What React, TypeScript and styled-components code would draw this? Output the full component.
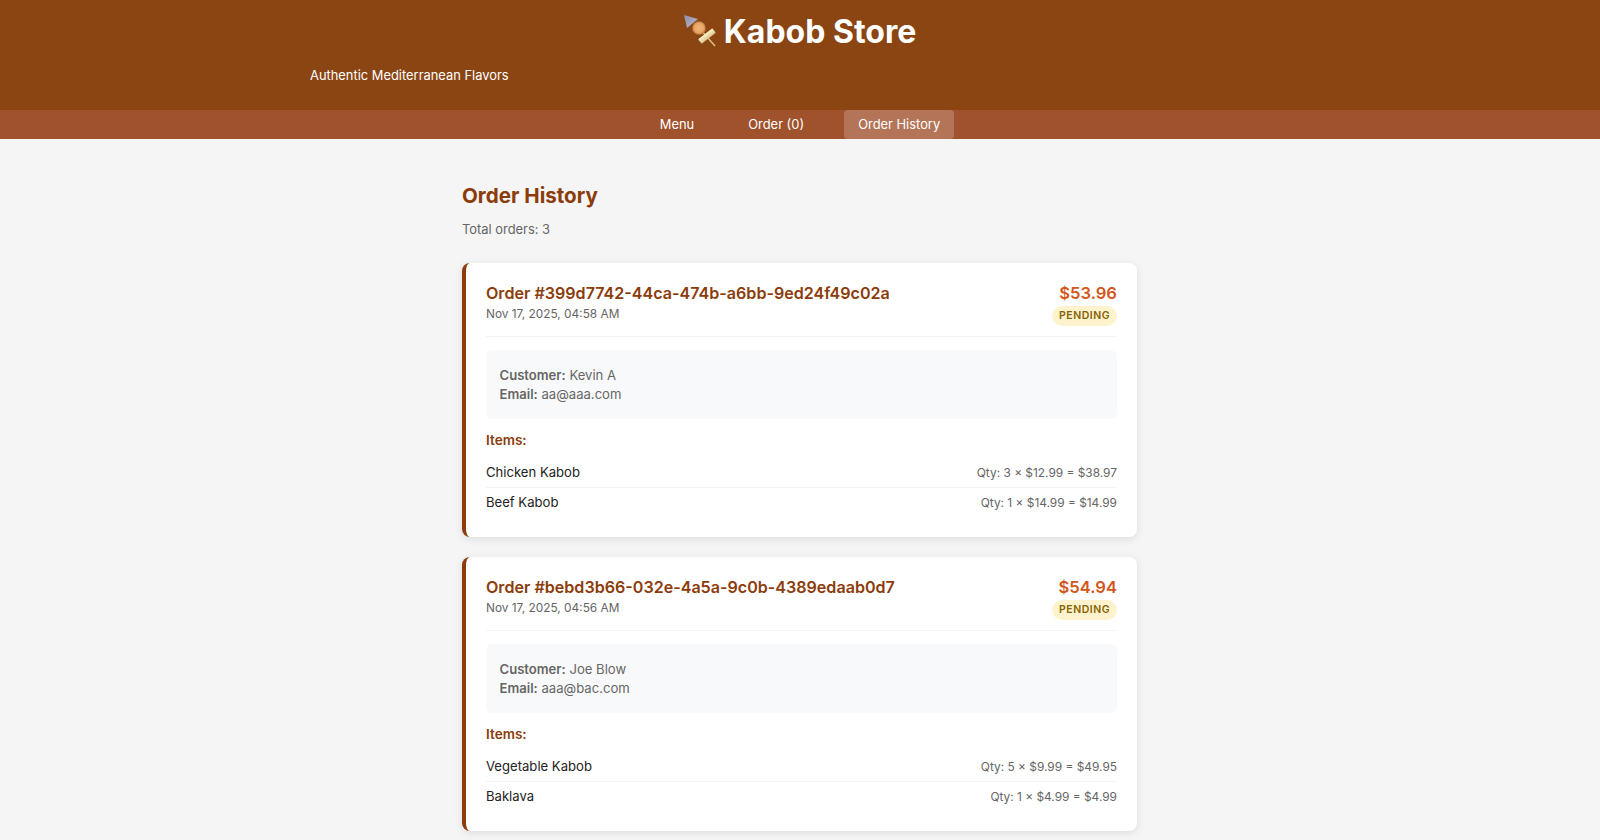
import React from 'react';
import styled, { createGlobalStyle } from 'styled-components';

const GlobalStyle = createGlobalStyle`
   html, body {
      margin: 0;
      padding: 0;
      height: 840px;
      overflow: hidden;
      background: #f5f5f5;
      font-family: Inter, "Liberation Sans", sans-serif;
   }
   * {
      box-sizing: border-box;
   }
`;

const Header = styled.header`
   background: #8b4513;
   color: #fff;
   height: 110px;
   padding-top: 11px;
`;

const HeaderInner = styled.div`
   width: 980px;
   margin: 0 auto;
`;

const Title = styled.h1`
   display: flex;
   justify-content: center;
   align-items: center;
   gap: 6px;
   margin: 0;
   font-size: 32px;
   line-height: 42px;
   font-weight: 700;
`;

const Tagline = styled.p`
   margin: 13px 0 0;
   font-size: 12.9px;
   line-height: 20px;
`;

const Nav = styled.nav`
   display: flex;
   justify-content: center;
   gap: 26px;
   height: 29px;
   background: #a0522d;
`;

const NavItem = styled.a<{ $active?: boolean }>`
   display: flex;
   align-items: center;
   padding: 0 14px;
   color: #fff;
   font-size: 12.9px;
   border-radius: 4px;
   background: ${props => (props.$active ? 'rgba(255, 255, 255, 0.2)' : 'transparent')};
`;

const Main = styled.main`
   width: 675px;
   margin-left: 462px;
   padding-top: 43px;
`;

const PageTitle = styled.h2`
   margin: 0;
   color: #8b3c0a;
   font-size: 20.6px;
   line-height: 27px;
   font-weight: 700;
`;

const TotalText = styled.p`
   margin: 11px 0 0;
   color: #666;
   font-size: 12.9px;
   line-height: 20px;
`;

const OrderList = styled.div`
   display: flex;
   flex-direction: column;
   gap: 20px;
   margin-top: 23px;
`;

const OrderCard = styled.article`
   height: 274px;
   padding: 20px;
   background: #fff;
   border-left: 4px solid #8b3c0a;
   border-radius: 8px;
   box-shadow: 0 2px 8px rgba(0, 0, 0, 0.1);
`;

const OrderHeader = styled.div`
   display: flex;
   justify-content: space-between;
   align-items: flex-start;
   height: 54px;
   border-bottom: 1px solid #f3f4f6;
`;

const OrderId = styled.h3`
   margin: 0;
   color: #8b3c0a;
   font-size: 16.1px;
   line-height: 20px;
   font-weight: 600;
`;

const OrderDate = styled.div`
   color: #666;
   font-size: 11.85px;
   line-height: 22px;
`;

const OrderSummary = styled.div`
   display: flex;
   flex-direction: column;
   align-items: flex-end;
`;

const OrderTotal = styled.div`
   color: #d2561a;
   font-size: 16.6px;
   line-height: 20px;
   font-weight: 600;
`;

const StatusBadge = styled.span`
   margin-top: 3px;
   padding: 0 7px;
   background: #fff3cd;
   color: #856404;
   font-size: 10.5px;
   line-height: 20px;
   font-weight: 600;
   letter-spacing: 0.5px;
   border-radius: 12px;
`;

const CustomerBox = styled.div`
   margin-top: 13px;
   padding: 16px 14px 0 13.5px;
   height: 69px;
   background: #f8f9fa;
   border-radius: 6px;
   color: #666;
   font-size: 13.1px;
   line-height: 19px;

   strong {
      font-weight: 600;
   }
`;

const ItemsLabel = styled.h4`
   margin: 11px 0 0;
   color: #8b3c0a;
   font-size: 13.6px;
   line-height: 20px;
   font-weight: 600;
`;

const ItemList = styled.div`
   margin-top: 8px;
`;

const ItemRow = styled.div`
   display: flex;
   justify-content: space-between;
   align-items: center;
   height: 29.5px;
   border-bottom: 1px solid #f3f4f6;

   &:last-child {
      border-bottom: none;
   }
`;

const ItemName = styled.span`
   color: #222;
   font-size: 13.1px;
`;

const ItemPrice = styled.span`
   color: #666;
   font-size: 11.9px;
`;

const SkewerIcon = () => (
   <svg width="34" height="34" viewBox="0 0 34 34">
      <defs>
         <linearGradient id="skewerTip" x1="0" y1="0" x2="1" y2="1">
            <stop offset="0" stopColor="#8f8fa8" />
            <stop offset="1" stopColor="#b8b8cc" />
         </linearGradient>
         <radialGradient id="skewerBall">
            <stop offset="0" stopColor="#f2b474" />
            <stop offset="0.7" stopColor="#e8a566" />
            <stop offset="1" stopColor="#b9763f" />
         </radialGradient>
         <linearGradient id="skewerHandle" x1="0" y1="0" x2="0" y2="1">
            <stop offset="0" stopColor="#fbf3d2" />
            <stop offset="1" stopColor="#dcc48a" />
         </linearGradient>
      </defs>
      <line x1="15" y1="13" x2="31" y2="31" stroke="#d8bf85" strokeWidth="1.5" />
      <polygon points="0,0 14,4 3,13" fill="url(#skewerTip)" />
      <circle cx="15" cy="13" r="6.8" fill="url(#skewerBall)" />
      <rect x="14" y="18.2" width="18" height="5.6" rx="0.8" transform="rotate(-38 23 21)" fill="url(#skewerHandle)" />
   </svg>
);

const orders = [
   {
      id: '399d7742-44ca-474b-a6bb-9ed24f49c02a',
      date: 'Nov 17, 2025, 04:58 AM',
      total: '$53.96',
      customer: 'Kevin A',
      email: 'aa@aaa.com',
      items: [
         { name: 'Chicken Kabob', price: 'Qty: 3 × $12.99 = $38.97' },
         { name: 'Beef Kabob', price: 'Qty: 1 × $14.99 = $14.99' },
      ],
   },
   {
      id: 'bebd3b66-032e-4a5a-9c0b-4389edaab0d7',
      date: 'Nov 17, 2025, 04:56 AM',
      total: '$54.94',
      customer: 'Joe Blow',
      email: 'aaa@bac.com',
      items: [
         { name: 'Vegetable Kabob', price: 'Qty: 5 × $9.99 = $49.95' },
         { name: 'Baklava', price: 'Qty: 1 × $4.99 = $4.99' },
      ],
   },
];

const App: React.FC = () => (
   <>
      <GlobalStyle />
      <Header>
         <HeaderInner>
            <Title><SkewerIcon />Kabob Store</Title>
            <Tagline>Authentic Mediterranean Flavors</Tagline>
         </HeaderInner>
      </Header>
      <Nav>
         <NavItem>Menu</NavItem>
         <NavItem>Order (0)</NavItem>
         <NavItem $active>Order History</NavItem>
      </Nav>
      <Main>
         <PageTitle>Order History</PageTitle>
         <TotalText>Total orders: 3</TotalText>
         <OrderList>
            {orders.map(order => (
               <OrderCard key={order.id}>
                  <OrderHeader>
                     <div>
                        <OrderId>Order #{order.id}</OrderId>
                        <OrderDate>{order.date}</OrderDate>
                     </div>
                     <OrderSummary>
                        <OrderTotal>{order.total}</OrderTotal>
                        <StatusBadge>PENDING</StatusBadge>
                     </OrderSummary>
                  </OrderHeader>
                  <CustomerBox>
                     <div><strong>Customer:</strong> {order.customer}</div>
                     <div><strong>Email:</strong> {order.email}</div>
                  </CustomerBox>
                  <ItemsLabel>Items:</ItemsLabel>
                  <ItemList>
                     {order.items.map(item => (
                        <ItemRow key={item.name}>
                           <ItemName>{item.name}</ItemName>
                           <ItemPrice>{item.price}</ItemPrice>
                        </ItemRow>
                     ))}
                  </ItemList>
               </OrderCard>
            ))}
         </OrderList>
      </Main>
   </>
);

export default App;
